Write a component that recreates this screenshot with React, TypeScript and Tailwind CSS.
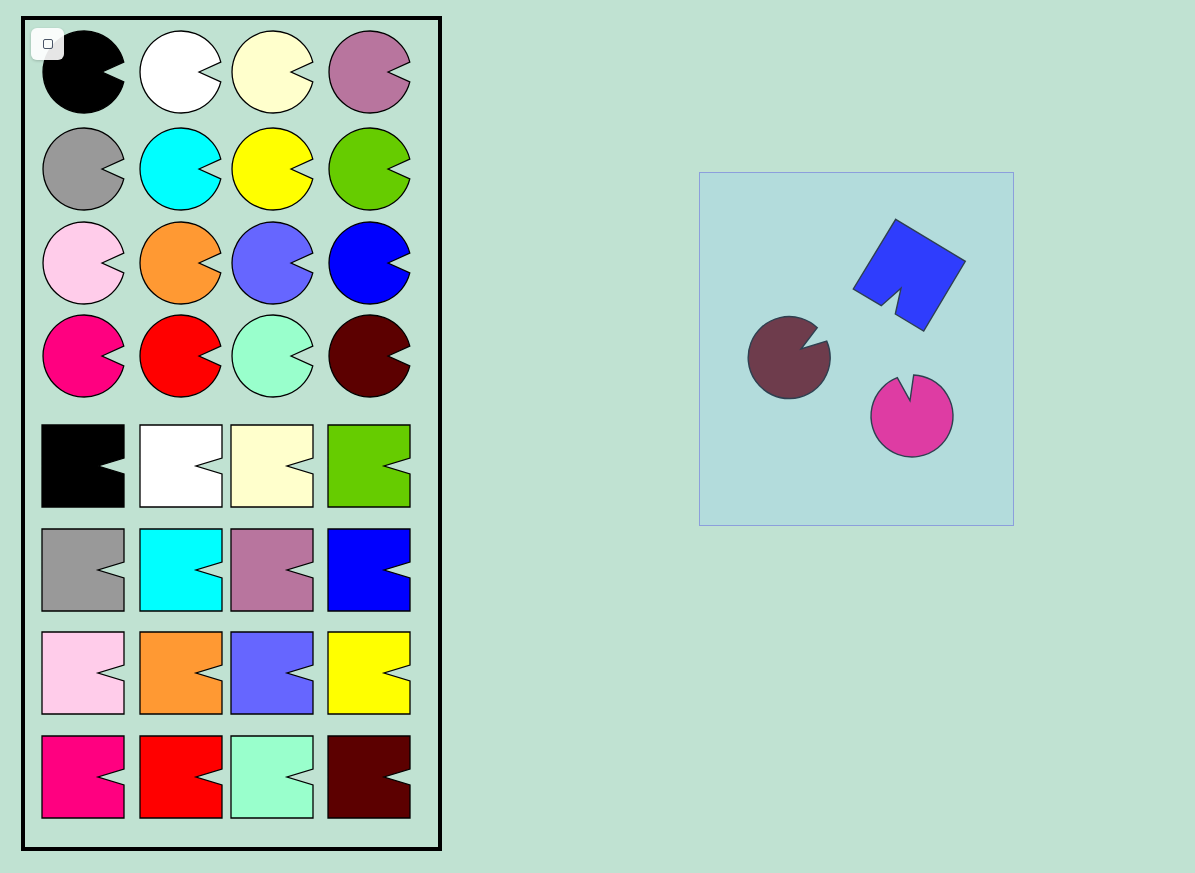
import React from 'react';

const circleRows: { mt: string; cells: string[] }[] = [
  { mt: 'mt-[10px]', cells: ['#000000', '#ffffff', '#ffffcc', '#b8759e'] },
  { mt: 'mt-[13px]', cells: ['#999999', '#00ffff', '#ffff00', '#66cc00'] },
  { mt: 'mt-[10px]', cells: ['#ffccea', '#ff9933', '#6666ff', '#0000ff'] },
  { mt: 'mt-[9px]', cells: ['#ff0080', '#ff0000', '#99ffcc', '#5c0000'] },
];

const squareRows: { mt: string; cells: string[] }[] = [
  { mt: 'mt-[26px]', cells: ['#000000', '#ffffff', '#ffffcc', '#66cc00'] },
  { mt: 'mt-[20px]', cells: ['#999999', '#00ffff', '#b8759e', '#0000ff'] },
  { mt: 'mt-[19px]', cells: ['#ffccea', '#ff9933', '#6666ff', '#ffff00'] },
  { mt: 'mt-[20px]', cells: ['#ff0080', '#ff0000', '#99ffcc', '#5c0000'] },
];

// left offsets of the four columns inside the panel
const pacMargins = ['ml-[17px]', 'ml-[13px]', 'ml-[8px]', 'ml-[13px]'];
const sqMargins = ['ml-[16px]', 'ml-[14px]', 'ml-[7px]', 'ml-[13px]'];

function Pac({ color }: { color: string }) {
  return (
    <svg width="84" height="84" viewBox="0 0 84 84" className="block">
      <path
        d="M 60 42 L 81.8 32.1 A 41 41 0 1 0 81.8 51.9 Z"
        fill={color}
        stroke="#000"
        strokeWidth="1.3"
      />
    </svg>
  );
}

function Notched({ color }: { color: string }) {
  return (
    <svg width="84" height="84" viewBox="0 0 84 84" className="block">
      <path
        d="M 1 1 H 83 V 34 L 57 42 L 83 50 V 83 H 1 Z"
        fill={color}
        stroke="#000"
        strokeWidth="1.3"
      />
    </svg>
  );
}

function ShapeRow({ cells, mt, kind }: { cells: string[]; mt: string; kind: 'pac' | 'sq' }) {
  const margins = kind === 'pac' ? pacMargins : sqMargins;
  return (
    <div className={'flex ' + mt}>
      {cells.map((c, i) => (
        <div key={i} className={margins[i]}>
          {kind === 'pac' ? <Pac color={c} /> : <Notched color={c} />}
        </div>
      ))}
    </div>
  );
}

export default function App() {
  return (
    <div className="min-h-[873px] w-full bg-[#c0e2d2] font-['Liberation_Sans',sans-serif]">
      <div className="flex items-start pl-[21px] pt-[16px] gap-[257px]">
        {/* Palette */}
        <div className="relative w-[421px] h-[835px] border-4 border-black shrink-0">
          <button className="absolute left-[6px] top-[8px] w-[33px] h-[32px] rounded-md bg-white/90 shadow-[0_1px_3px_rgba(0,0,0,0.2)] flex items-center justify-center">
            <span className="block w-[10px] h-[10px] rounded-[2px] border-[1.5px] border-[#4a5568]" />
          </button>
          {circleRows.map((r, i) => (
            <ShapeRow key={'c' + i} cells={r.cells} mt={r.mt} kind="pac" />
          ))}
          {squareRows.map((r, i) => (
            <ShapeRow key={'s' + i} cells={r.cells} mt={r.mt} kind="sq" />
          ))}
        </div>

        {/* Canvas */}
        <div className="mt-[156px] w-[315px] h-[354px] border border-[#8c9fdc] bg-[#b3dcdc] shrink-0">
          <svg width="313" height="352" viewBox="0 0 313 352" className="block">
            <polygon
              points="195.7,46.3 265.3,88.3 223.7,158 195.3,141 201,115.3 181.3,132.7 153.3,116"
              fill="#2f3dfd"
              stroke="#2e4050"
              strokeWidth="1.4"
            />
            <path
              d="M 101 176 L 117.3 154.7 A 41 41 0 1 0 126.7 168 Z"
              fill="#6e3c4c"
              stroke="#2e4050"
              strokeWidth="1.4"
            />
            <path
              d="M 210 227.7 L 197.3 204.7 A 41 41 0 1 0 213.7 202 Z"
              fill="#de3ca3"
              stroke="#2e4050"
              strokeWidth="1.4"
            />
          </svg>
        </div>
      </div>
    </div>
  );
}
